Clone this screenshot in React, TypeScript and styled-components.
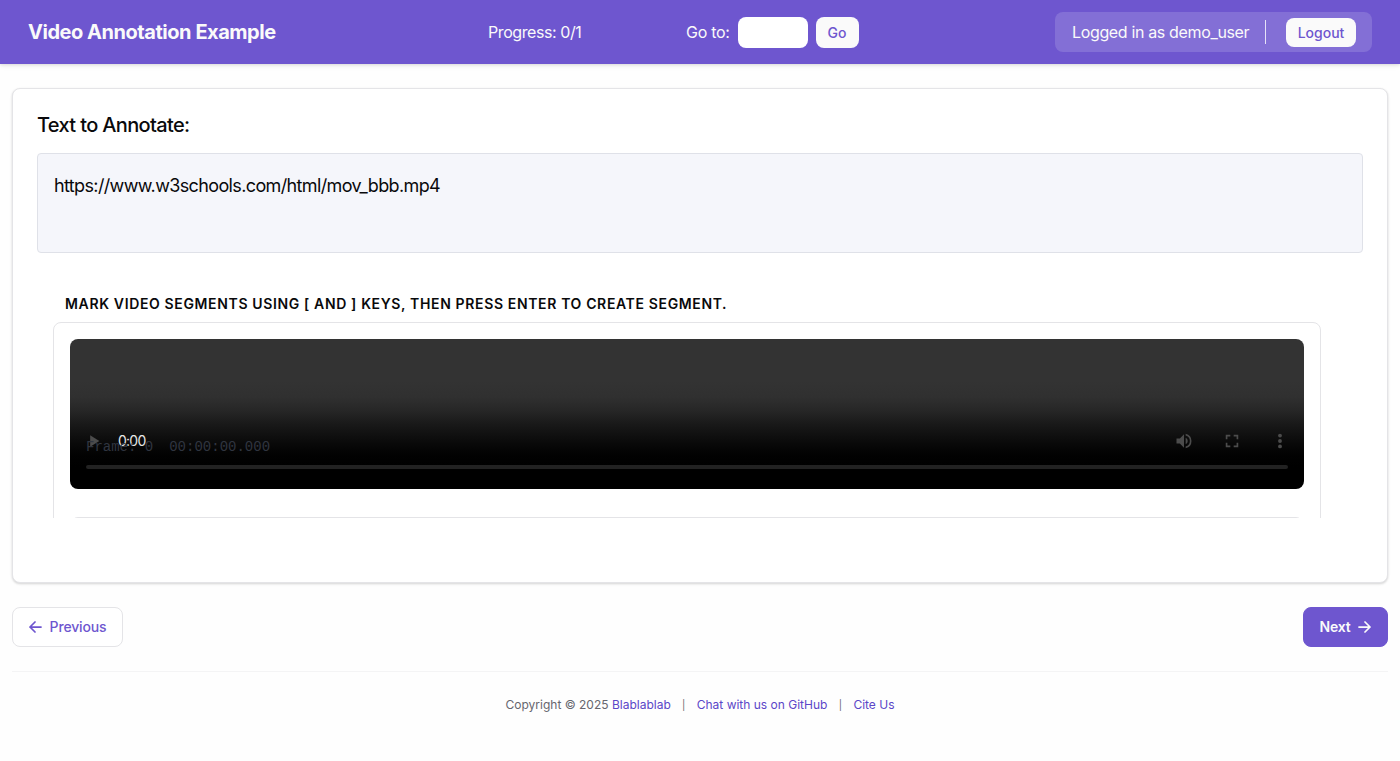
import React from "react";
import styled, { createGlobalStyle } from "styled-components";

const GlobalStyle = createGlobalStyle`
  *, *::before, *::after { box-sizing: border-box; }
  body {
    margin: 0;
    background: #fefefe;
    color: #09090b;
    font-family: Inter, "Liberation Sans", sans-serif;
    font-size: 16px;
    line-height: 24px;
    -webkit-font-smoothing: antialiased;
  }
  h1, h2, p { margin: 0; }
  a { color: #5b46c8; text-decoration: none; }
  button, input { font-family: inherit; }
`;

const Text = styled.span<{ $track?: number }>`
  white-space: nowrap;
  letter-spacing: ${(p) => p.$track ?? 0}px;
`;

const Header = styled.header`
  display: grid;
  grid-template-columns: 460px 198px 1fr auto;
  align-items: center;
  height: 64px;
  padding: 0 28px;
  background: #6e56cf;
  color: #fafafa;
  box-shadow: 0 1px 3px rgba(0, 0, 0, 0.1), 0 2px 6px rgba(0, 0, 0, 0.06);
`;

const Brand = styled.h1`
  font-size: 20px;
  font-weight: 700;
  line-height: 28px;
  letter-spacing: -0.46px;
  white-space: nowrap;
`;

const GoTo = styled.div`
  display: flex;
  align-items: center;
  gap: 8px;
`;

const GoToInput = styled.input`
  width: 70px;
  height: 31px;
  padding: 0 8px;
  border: 0;
  border-radius: 8px;
  background: #fff;
`;

const HeaderButton = styled.button<{ $width: number; $height: number }>`
  width: ${(p) => p.$width}px;
  height: ${(p) => p.$height}px;
  padding: 0;
  border: 0;
  border-radius: 8px;
  background: #fafafa;
  color: #6e56cf;
  font-size: 14px;
  font-weight: 500;
  white-space: nowrap;
`;

const UserPanel = styled.div`
  display: flex;
  align-items: center;
  width: 317px;
  height: 40px;
  padding: 0 16px 0 17px;
  border-radius: 8px;
  background: rgba(255, 255, 255, 0.15);
`;

const UserName = styled.div`
  display: flex;
  align-items: center;
  justify-content: space-between;
  width: 194px;
  height: 24px;
  border-right: 1px solid rgba(255, 255, 255, 0.8);
  margin-right: 20px;
`;

const Main = styled.main`
  padding: 24px 12px 0;
`;

const Card = styled.section`
  height: 495px;
  padding: 24px;
  border: 1px solid #e4e4e7;
  border-radius: 8px;
  background: #fff;
  box-shadow: 0 1px 3px rgba(0, 0, 0, 0.1), 0 1px 2px rgba(0, 0, 0, 0.08);
`;

const CardTitle = styled.h2`
  font-size: 20px;
  font-weight: 500;
  line-height: 24px;
  letter-spacing: -0.65px;
`;

const InstanceText = styled.div`
  height: 100px;
  margin-top: 16px;
  padding: 16px;
  border: 1px solid #dfe1e8;
  border-radius: 4px;
  background: #f5f6fb;
  font-size: 18px;
  line-height: 32px;
`;

const Schema = styled.div`
  height: 226px;
  margin: 39px 42px 0 16px;
  overflow: hidden;
`;

const SchemaTitle = styled.p`
  padding-left: 12px;
  font-size: 14px;
  font-weight: 600;
  line-height: 24px;
  letter-spacing: 0.64px;
  white-space: nowrap;
`;

const Annotator = styled.div`
  height: 280px;
  margin-top: 6px;
  padding: 16px;
  border: 1px solid #e4e4e7;
  border-radius: 8px;
  background: #fff;
`;

const Player = styled.div`
  position: relative;
  display: flex;
  flex-direction: column;
  justify-content: flex-end;
  height: 150px;
  padding: 0 16px 20px;
  border-radius: 8px;
  background: linear-gradient(
    #333 0, #333 42px, #303030 58px, #262626 72px, #1a1a1a 84px,
    #101010 96px, #080808 106px, #020202 116px, #000 128px
  );
`;

const Controls = styled.div`
  display: flex;
  align-items: center;
  height: 32px;
  margin-bottom: 8px;
  color: #4c4c4c;
`;

const Time = styled.span`
  flex: 1;
  margin-left: 12px;
  color: #e6e6e6;
  font-size: 14px;
  letter-spacing: -0.75px;
`;

const Icon = styled.svg`
  flex: none;
  width: 20px;
  height: 20px;
  fill: currentColor;
`;

const ControlIcons = styled.div`
  display: flex;
  gap: 28px;
  margin-right: -2px;
`;

const Track = styled.div`
  height: 4px;
  border-radius: 2px;
  background: #222;
`;

const FrameReadout = styled.div`
  position: absolute;
  left: 16px;
  top: 98px;
  display: flex;
  gap: 16px;
  color: #303540;
  font-family: "Liberation Mono", monospace;
  font-size: 14px;
  line-height: 20px;
`;

const Timeline = styled.div`
  height: 80px;
  margin-top: 28px;
  border: 1px solid #e4e4e7;
  border-radius: 8px;
`;

const Pager = styled.nav`
  display: flex;
  justify-content: space-between;
  margin-top: 24px;
`;

const PagerButton = styled.button<{ $primary?: boolean }>`
  display: flex;
  align-items: center;
  justify-content: center;
  gap: 8px;
  width: ${(p) => (p.$primary ? 85 : 111)}px;
  height: 40px;
  padding: 0 0 2px;
  border: 1px solid ${(p) => (p.$primary ? "#6e56cf" : "#e4e4e7")};
  border-radius: 8px;
  background: ${(p) => (p.$primary ? "#6e56cf" : "#fff")};
  color: ${(p) => (p.$primary ? "#fafafa" : "#6e56cf")};
  font-size: 14px;
  font-weight: ${(p) => (p.$primary ? 600 : 500)};
`;

const Arrow = styled.svg`
  width: 13px;
  height: 14px;
  margin-top: 1px;
  fill: none;
  stroke: currentColor;
  stroke-width: 1.75;
  stroke-linecap: round;
  stroke-linejoin: round;
`;

const Footer = styled.footer`
  display: flex;
  justify-content: center;
  margin-top: 24px;
  padding-top: 23px;
  border-top: 1px solid #f4f4f5;
  color: #66666e;
  font-size: 12px;
  line-height: 20px;
`;

const Divider = styled.span`
  width: 26px;
  font-size: 10px;
  text-align: center;
`;

export default function App() {
  return (
    <>
      <GlobalStyle />
      <Header>
        <Brand>Video Annotation Example</Brand>
        <Text $track={-0.42}>Progress: 0/1</Text>
        <GoTo>
          <Text $track={-0.3}>Go to:</Text>
          <GoToInput aria-label="Go to" />
          <HeaderButton $width={43} $height={31}>Go</HeaderButton>
        </GoTo>
        <UserPanel>
          <UserName>
            <Text $track={-0.35}>Logged in as demo_user</Text>
          </UserName>
          <HeaderButton $width={70} $height={29}>Logout</HeaderButton>
        </UserPanel>
      </Header>
      <Main>
        <Card>
          <CardTitle>Text to Annotate:</CardTitle>
          <InstanceText>
            <Text $track={-0.63}>https://www.w3schools.com/html/mov_bbb.mp4</Text>
          </InstanceText>
          <Schema>
            <SchemaTitle>MARK VIDEO SEGMENTS USING [ AND ] KEYS, THEN PRESS ENTER TO CREATE SEGMENT.</SchemaTitle>
            <Annotator>
              <Player>
                <FrameReadout>
                  <span>Frame: 0</span>
                  <span>00:00:00.000</span>
                </FrameReadout>
                <Controls>
                  <Icon viewBox="0 0 24 24"><path d="M5 5v14l11-7z" /></Icon>
                  <Time>0:00</Time>
                  <ControlIcons>
                    <Icon viewBox="0 0 24 24">
                      <path d="M3 9v6h4l5 5V4L7 9H3zm13.5 3A4.5 4.5 0 0 0 14 7.97v8.05A4.47 4.47 0 0 0 16.500 12zM14 3.230v2.060a7 7 0 0 1 0 13.420v2.060a9 9 0 0 0 0-17.540z" />
                    </Icon>
                    <Icon viewBox="0 0 24 24">
                      <path d="M4.500 4.500H10v2H6.500V10h-2zM14 4.500h5.500V10h-2V6.500H14zM4.500 14h2v3.500H10v2H4.500zM17.500 14h2v5.500H14v-2h3.500z" />
                    </Icon>
                    <Icon viewBox="0 0 24 24">
                      <circle cx="12" cy="5.500" r="2.300" />
                      <circle cx="12" cy="12" r="2.300" />
                      <circle cx="12" cy="18.500" r="2.300" />
                    </Icon>
                  </ControlIcons>
                </Controls>
                <Track />
              </Player>
              <Timeline />
            </Annotator>
          </Schema>
        </Card>
        <Pager>
          <PagerButton>
            <Arrow viewBox="0 0 13 14"><path d="M12 7H1M6 2L1 7l5 5" /></Arrow>
            <Text $track={-0.15}>Previous</Text>
          </PagerButton>
          <PagerButton $primary>
            <Text $track={-0.2}>Next</Text>
            <Arrow viewBox="0 0 13 14"><path d="M1 7h11M7 2l5 5-5 5" /></Arrow>
          </PagerButton>
        </Pager>
        <Footer>
          <Text>Copyright © 2025 <a href="#lab">Blablablab</a></Text>
          <Divider>|</Divider>
          <Text><a href="#chat">Chat with us on GitHub</a></Text>
          <Divider>|</Divider>
          <Text><a href="#cite">Cite Us</a></Text>
        </Footer>
      </Main>
    </>
  );
}
